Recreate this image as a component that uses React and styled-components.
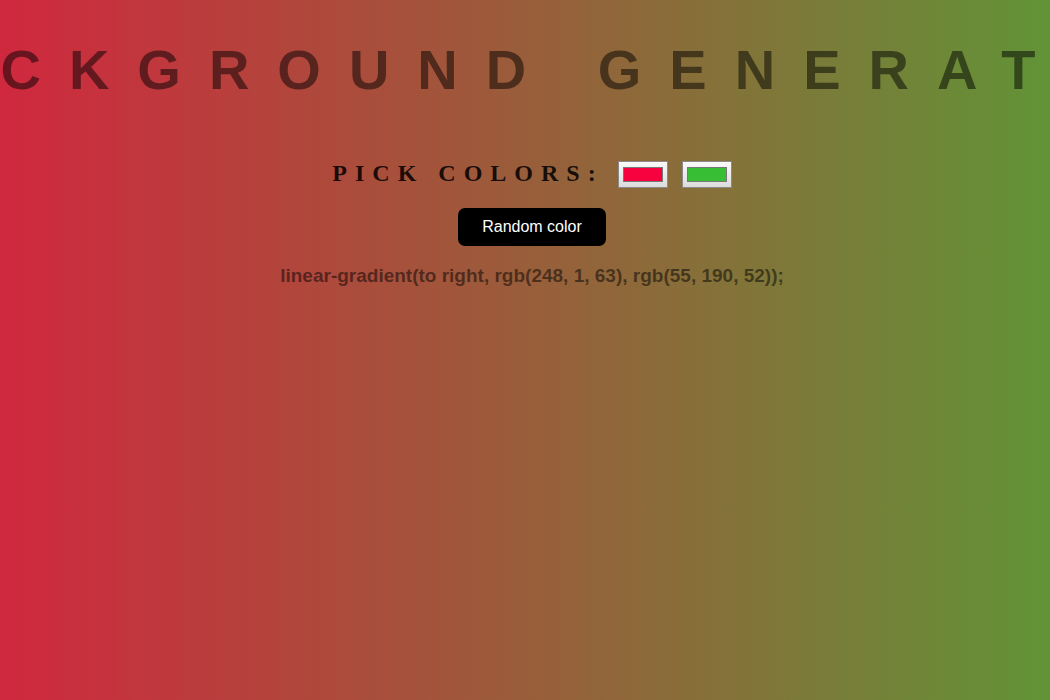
import React, { useState } from "react";
import styled, { createGlobalStyle } from "styled-components";

const GlobalStyle = createGlobalStyle`
  html, body {
    margin: 0;
    padding: 0;
    min-height: 100%;
  }
  body {
    overflow: hidden;
    font-family: "Liberation Sans", Arial, sans-serif;
  }
`;

const Backdrop = styled.div`
  background: linear-gradient(to right, rgb(208, 40, 62), rgb(98, 147, 55));
`;

const Page = styled.main`
  min-height: 100vh;
  padding: 38px 0 0 14px;
  box-sizing: border-box;
  display: flex;
  flex-direction: column;
  align-items: center;
  overflow: hidden;
`;

const Title = styled.h1`
  margin: 0;
  padding-left: 2px;
  flex-shrink: 0;
  white-space: nowrap;
  font-family: "Liberation Sans", Arial, sans-serif;
  font-size: 56px;
  font-weight: 700;
  line-height: 64px;
  letter-spacing: 28px;
  text-transform: uppercase;
  color: rgba(0, 0, 0, 0.5);
`;

const PickerRow = styled.div`
  margin-top: 59px;
  display: flex;
  align-items: center;
  gap: 14px;
`;

const PickerLabel = styled.h3`
  margin: 0 0 3px;
  font-family: "Liberation Serif", "Times New Roman", serif;
  font-size: 24px;
  font-weight: 700;
  line-height: 24px;
  letter-spacing: 8px;
  color: rgba(0, 0, 0, 0.85);
`;

const ColorInput = styled.input`
  -webkit-appearance: none;
  appearance: none;
  width: 50px;
  height: 27px;
  box-sizing: border-box;
  margin: 0;
  padding: 0;
  border: 1px solid #8a8a8a;
  background: linear-gradient(#fafafa, #dcdcdc);
  cursor: pointer;

  &::-webkit-color-swatch-wrapper {
    padding: 5px 4px;
  }
  &::-webkit-color-swatch {
    border: 1px solid #777;
    border-radius: 0;
  }
`;

const RandomButton = styled.button`
  margin-top: 20px;
  width: 148px;
  height: 38px;
  border: none;
  border-radius: 7px;
  background: #000;
  color: #fff;
  font-family: "Liberation Sans", Arial, sans-serif;
  font-size: 16px;
  cursor: pointer;
`;

const CssOutput = styled.h3`
  margin: 19px 0 0;
  font-family: "Liberation Sans", Arial, sans-serif;
  font-size: 19px;
  font-weight: 700;
  line-height: 22px;
  color: rgba(0, 0, 0, 0.5);
`;

function App() {
  const [left, setLeft] = useState("#f8013f");
  const [right, setRight] = useState("#37be34");

  const toRgb = (hex) => {
    const n = parseInt(hex.slice(1), 16);
    return `rgb(${(n >> 16) & 255}, ${(n >> 8) & 255}, ${n & 255})`;
  };

  const randomHex = () =>
    "#" + Math.floor(Math.random() * 0xffffff).toString(16).padStart(6, "0");

  return (
    <Backdrop>
      <GlobalStyle />
      <Page>
        <Title>Background Generator</Title>
        <PickerRow>
          <PickerLabel>PICK COLORS:</PickerLabel>
          <ColorInput type="color" value={left} onChange={(e) => setLeft(e.target.value)} />
          <ColorInput type="color" value={right} onChange={(e) => setRight(e.target.value)} />
        </PickerRow>
        <RandomButton
          onClick={() => {
            setLeft(randomHex());
            setRight(randomHex());
          }}
        >
          Random color
        </RandomButton>
        <CssOutput>
          linear-gradient(to right, {toRgb(left)}, {toRgb(right)});
        </CssOutput>
      </Page>
    </Backdrop>
  );
}

export default App;
